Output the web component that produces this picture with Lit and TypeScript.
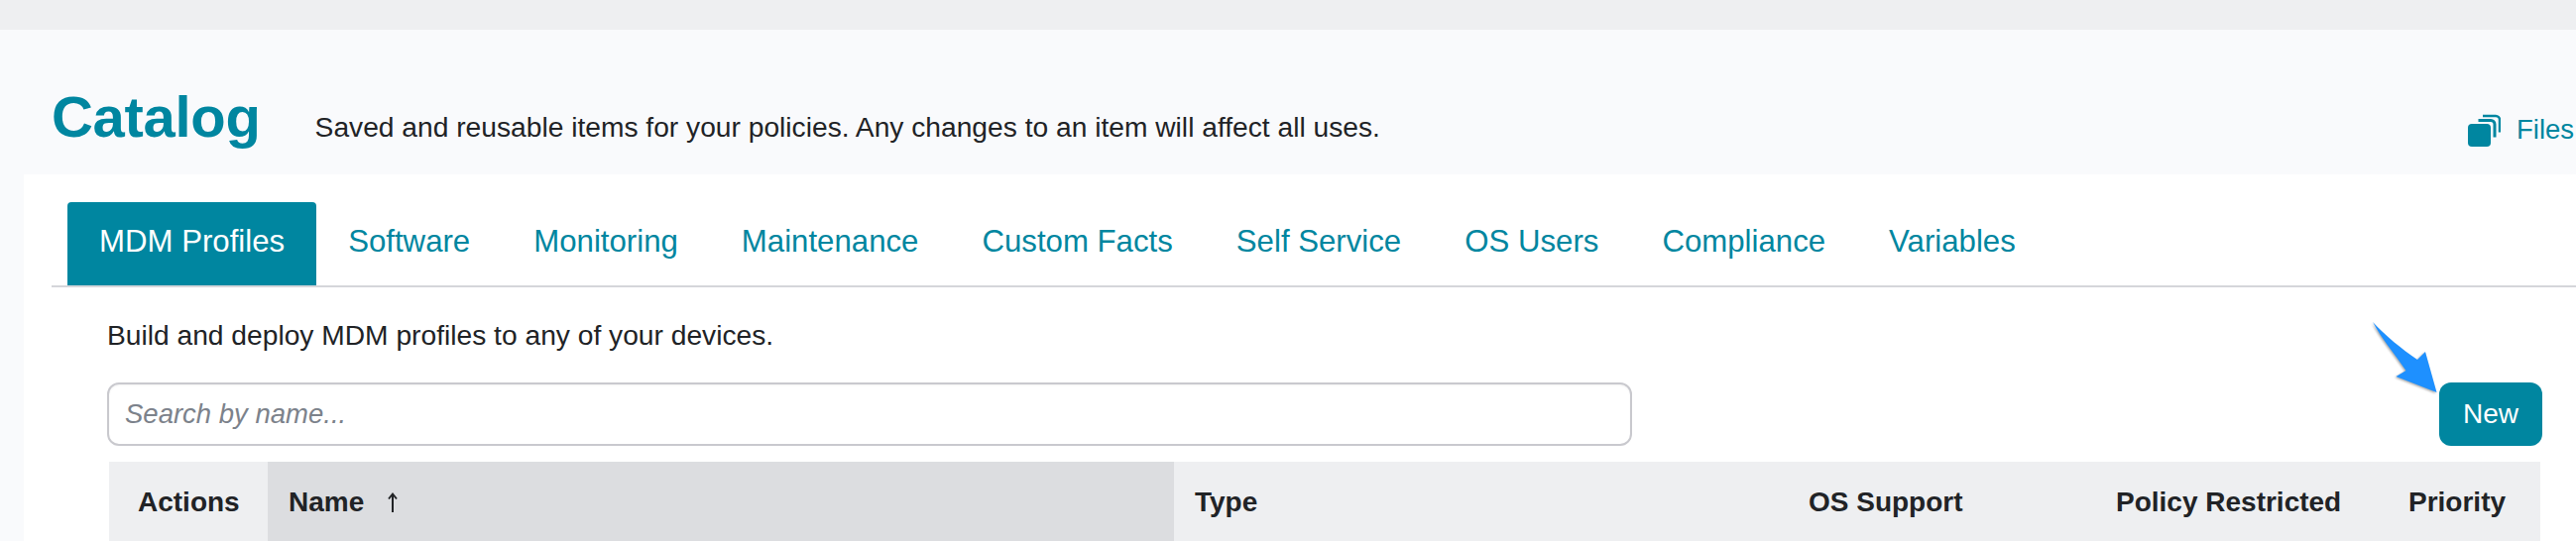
import { LitElement, html, css, svg } from "lit";
import { customElement } from "lit/decorators.js";

const TABS = ["MDM Profiles", "Software", "Monitoring", "Maintenance", "Custom Facts", "Self Service", "OS Users", "Compliance", "Variables"];

@customElement("app-root")
export class AppRoot extends LitElement {
  static styles = css`
    :host {
      display: block;
      width: 2598px;
      height: 546px;
      overflow: hidden;
      background: #f9fafc;
      font-family: "Liberation Sans", Arial, sans-serif;
      color: #212326;
    }
    .topbar { height: 30px; background: #eeeff1; }
    .head {
      height: 146px;
      box-sizing: border-box;
      padding: 52px 0 0 52px;
      display: flex;
      align-items: flex-start;
      white-space: nowrap;
    }
    h1 {
      margin: 0;
      font-size: 58px;
      line-height: 72px;
      font-weight: 700;
      color: #0086a0;
      letter-spacing: -0.3px;
    }
    .lead { margin: 30px 0 0 55px; font-size: 28.2px; line-height: 32px; flex: 1; }
    .files {
      display: flex;
      align-items: center;
      gap: 16px;
      margin-top: 32px;
      width: 109px;
      flex: none;
      color: #0086a0;
      font-size: 27.5px;
      line-height: 34px;
    }
    .panel {
      margin-left: 24px;
      background: #fff;
      height: 370px;
      padding: 28px 0 0 28px;
      box-sizing: border-box;
    }
    .tabs {
      display: flex;
      height: 86px;
      box-sizing: border-box;
      border-bottom: 2px solid #d5d6da;
      padding-left: 16px;
    }
    .tab {
      height: 84px;
      box-sizing: border-box;
      padding: 0 32px 5px;
      display: flex;
      align-items: center;
      font-size: 31.2px;
      color: #0086a0;
      border-radius: 4px 4px 0 0;
      white-space: nowrap;
    }
    .tab.on { background: #0086a0; color: #fff; }
    .body { padding: 0 34px 0 56px; }
    .blurb { font-size: 28.2px; line-height: 32px; padding-top: 32px; height: 34px; }
    .toolbar { display: flex; justify-content: space-between; margin-top: 30px; position: relative; }
    .search {
      width: 1538px;
      height: 64px;
      box-sizing: border-box;
      border: 2px solid #c9c9ce;
      border-radius: 12px;
      padding: 0 16px;
      display: flex;
      align-items: center;
      font-size: 27.5px;
      font-style: italic;
      color: #7c828b;
      box-shadow: inset 0 1px 2px rgba(0,0,0,.05);
    }
    .new {
      width: 104px;
      height: 64px;
      border-radius: 12px;
      background: #0086a0;
      color: #fff;
      font-size: 28px;
      display: flex;
      align-items: center;
      justify-content: center;
    }
    .arrow { position: absolute; left: 2282px; top: -64px; overflow: visible; }
    .table {
      margin: 16px 0 0 2px;
      width: 2452px;
      height: 80px;
      display: grid;
      grid-template-columns: 160px 914px 610px 310px 306px 152px;
      background: #eeeff1;
      font-size: 28px;
      font-weight: 700;
    }
    .th { display: flex; align-items: center; padding: 2px 0 0 30px; white-space: nowrap; }
    .th.sorted { background: #dcdde0; padding-left: 21px; }
    .th.flush { padding-left: 21px; }
    .th.last { padding-left: 19px; }
    .th.a { padding-left: 29px; }
    .sort { margin-left: 22px; display: block; }
  `;

  render() {
    return html`
      <div class="topbar"></div>
      <div class="head">
        <h1>Catalog</h1>
        <div class="lead">Saved and reusable items for your policies. Any changes to an item will affect all uses.</div>
        <div class="files">
          <svg width="33" height="33" viewBox="0 0 33 33" fill="none">
            <rect x="0" y="10" width="23" height="23" rx="4" fill="#0086a0"/>
            <path d="M10.500 6.500h12.500a4 4 0 0 1 4 4v13" stroke="#0086a0" stroke-width="3"/>
            <path d="M15 2h13a4 4 0 0 1 4 4v12.500" stroke="#0086a0" stroke-width="2.500"/>
          </svg>
          <span>Files</span>
        </div>
      </div>
      <div class="panel">
        <div class="tabs">
          ${TABS.map((t, i) => html`<div class="tab ${i === 0 ? "on" : ""}">${t}</div>`)}
        </div>
        <div class="body">
          <div class="blurb">Build and deploy MDM profiles to any of your devices.</div>
          <div class="toolbar">
            <div class="search">Search by name...</div>
            <div class="new">New</div>
            <svg class="arrow" width="70" height="78" viewBox="0 0 70 78">
              ${svg`<path d="M3 3 C16 17 32 30 48 41 L56 33 L67.500 74 L26.500 58 L36.500 52 C25 35 12 20 3 3Z" fill="#1e90ff" style="filter:drop-shadow(-1px 1px 1px rgba(0,0,0,.35))"/>`}
            </svg>
          </div>
          <div class="table">
            <div class="th a">Actions</div>
            <div class="th sorted">Name
              <svg class="sort" width="14" height="22" viewBox="0 0 14 22" fill="none" stroke="#212326" stroke-width="2"><path d="M7 21V3M3 7.500 7 2.500 11 7.500"/></svg>
            </div>
            <div class="th flush">Type</div>
            <div class="th">OS Support</div>
            <div class="th">Policy Restricted</div>
            <div class="th last">Priority</div>
          </div>
        </div>
      </div>
    `;
  }
}
